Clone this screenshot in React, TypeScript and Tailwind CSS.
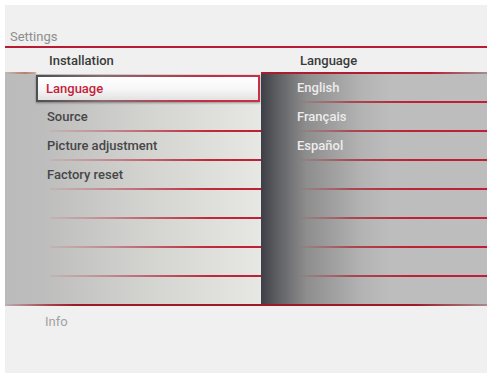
import React from 'react'

const leftItems = ['Source', 'Picture adjustment', 'Factory reset', '', '', '', '']
const rightItems = ['English', 'Français', 'Español', '', '', '', '', '']

const font = { fontFamily: 'Roboto, "Liberation Sans", sans-serif' }

const LeftRow = ({ label, last }: { label: string; last?: boolean }) => (
  <div className={`flex flex-col ${last ? 'h-[27px]' : 'h-[29px]'}`}>
    <div className="flex-1 flex items-center pl-[42px] pt-[1px] text-[13px] font-medium text-[#474747]">{label}</div>
    {!last && (
      <div className="ml-[45px] h-[2px] bg-[linear-gradient(to_right,rgba(200,150,150,0.25),#c0717a_40%,#bf2a3c_75%,#c11d37)]" />
    )}
  </div>
)

const RightRow = ({ label, last }: { label: string; last?: boolean }) => (
  <div className={`flex flex-col ${last ? 'h-[27px]' : 'h-[29px]'}`}>
    <div className="flex-1 flex items-center pl-[36px] pt-[1px] text-[13px] font-medium text-[#ececec]">{label}</div>
    {!last && (
      <div className="ml-[39px] h-[2px] bg-[linear-gradient(to_right,rgba(150,120,120,0.3),#a84a52_50px,#bd2236_110px,#c11d37)]" />
    )}
  </div>
)

export default function App() {
  return (
    <div className="w-[487px] h-[373px] bg-white pt-[5px] pl-[5px] overflow-hidden" style={font}>
      <div className="h-full flex flex-col bg-[#eff0ef]">
        {/* title */}
        <div className="h-[41px] flex items-end pl-[5px] text-[13px] text-[#8d8d8d]">Settings</div>
        <div className="h-[2px] bg-[#b81c33]" />

        {/* column headers */}
        <div className="h-[24px] flex items-center pt-[2px] text-[13px] font-medium text-[#3a3a3a]">
          <div className="w-[256px] pl-[44px]">Installation</div>
          <div className="pl-[39px]">Language</div>
        </div>

        {/* panels */}
        <div className="flex">
          <div className="w-[256px] flex flex-col bg-[linear-gradient(to_right,#bbbbbb_0%,#bdbdbd_15%,#d3d3d0_55%,#e7e7e3_100%)]">
            <div className="h-[2px] bg-[linear-gradient(to_right,#bbbbbb,#b78070_20px,#c8a89a_30px,#eff0ef_32px)]" />
            <div className="h-[29px] pt-[1px] pl-[31px] pr-[1px]">
              <div className="h-[27px] p-[2px] bg-[linear-gradient(to_right,#4e4e52,#8a6a70_30%,#c52c46_75%,#c8304a)] shadow-[0_1px_2px_rgba(0,0,0,0.35)]">
                <div className="h-full flex items-center pl-[8px] pt-[1px] text-[13px] font-medium text-[#c41e3a] bg-[linear-gradient(to_bottom,#ffffff,#f6f6f6_55%,#e2e2e2)]">
                  Language
                </div>
              </div>
            </div>
            {leftItems.map((l, i) => (
              <LeftRow key={i} label={l} last={i === leftItems.length - 1} />
            ))}
          </div>

          <div className="flex-1 flex flex-col bg-[linear-gradient(to_right,#3e3f46_0px,#5c5d61_15px,#8d8d8d_45px,#b3b3b3_100px,#bdbdbd_130px,#bdbdbd)]">
            <div className="h-[2px] bg-[linear-gradient(to_right,#a81c30,#b91d35_75%,#a09090_100%)]" />
            {rightItems.map((l, i) => (
              <RightRow key={i} label={l} last={i === rightItems.length - 1} />
            ))}
          </div>
        </div>
        <div className="h-[2px] bg-[linear-gradient(to_right,#b8b0b0,#a8404a_45px,#9c1a26_70px,#9c1a26_85%,#a88a8a_100%)]" />

        {/* info */}
        <div className="pt-[6px] pl-[40px] text-[13px] text-[#a2a2a2]">Info</div>
      </div>
    </div>
  )
}
